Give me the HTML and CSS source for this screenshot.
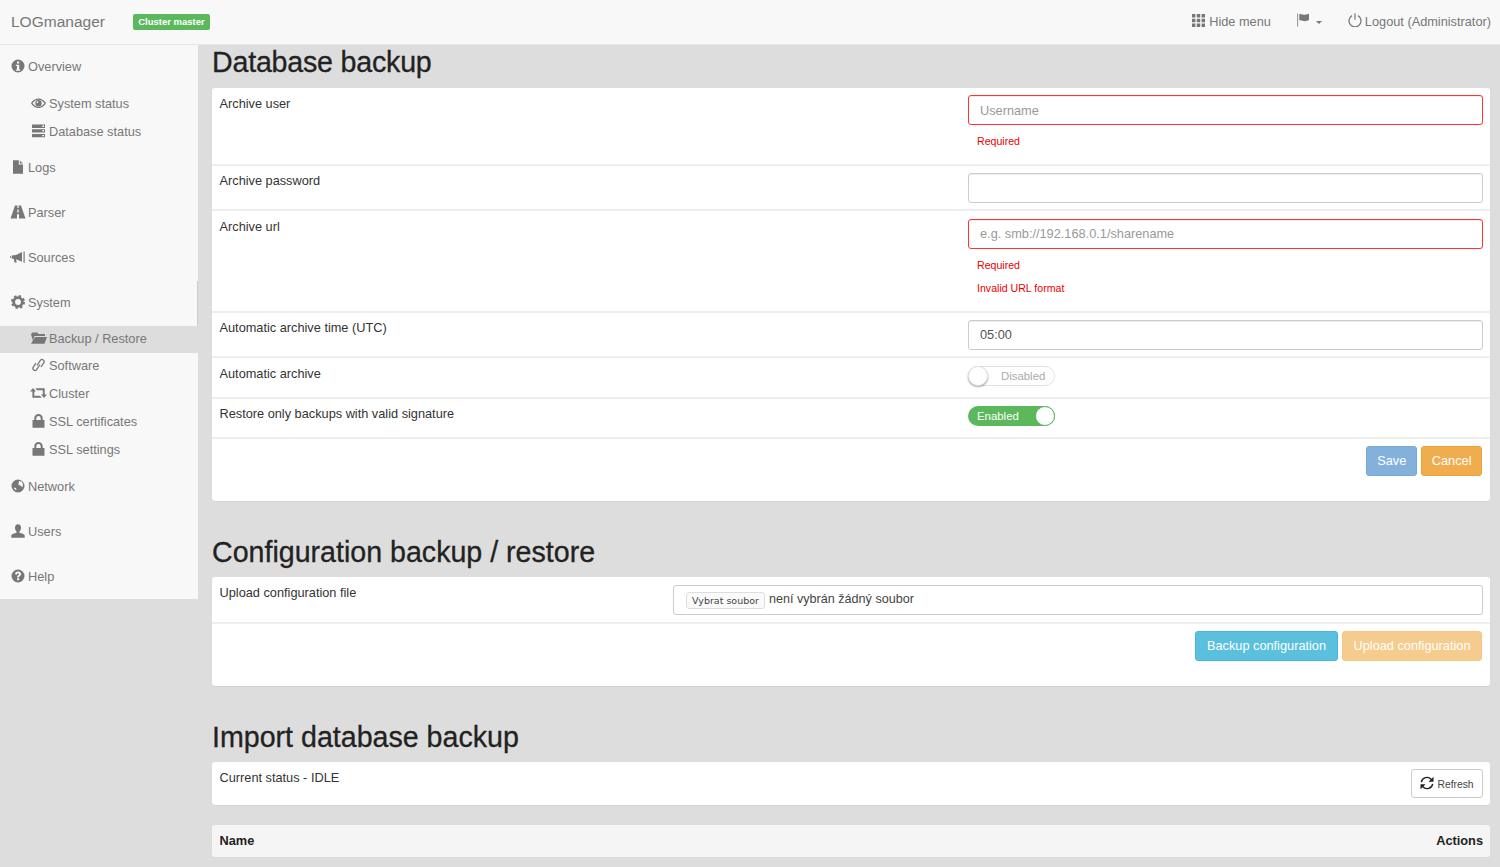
FILE: index.html
```html
<!DOCTYPE html>
<html lang="en">
<head>
<meta charset="utf-8">
<title>LOGmanager</title>
<link rel="stylesheet" href="styles.css">
</head>
<body>
<svg class="defs" width="0" height="0" aria-hidden="true">
  <symbol id="i-info" viewBox="0 0 14 14"><path fill-rule="evenodd" d="M7 .5a6.5 6.5 0 1 0 0 13a6.5 6.5 0 0 0 0-13zM6 2.6h2.2v2H6zM4.900 5.800h3.300v4.700h1v1.200H4.900v-1.200H6V7H4.900z"/></symbol>
  <symbol id="i-eye" viewBox="0 0 15 14"><path fill-rule="evenodd" d="M7.500 2.500C4 2.500 1.300 5 0 7.200C1.300 9.500 4 12 7.500 12S13.700 9.500 15 7.200C13.700 5 11 2.500 7.500 2.500zM7.500 3.800C10 3.800 12.200 5.500 13.400 7.200C12.200 9 10 10.800 7.500 10.800S2.800 9 1.600 7.200C2.800 5.500 5 3.800 7.500 3.800z"/><path fill-rule="evenodd" d="M7.500 4a3.200 3.200 0 1 0 0 6.400a3.200 3.200 0 0 0 0-6.400zM6 5.200l1.500.6l-.8 1.400l-1.300-.7z"/></symbol>
  <symbol id="i-server" viewBox="0 0 15 14"><path fill-rule="evenodd" d="M1 .5h13v3.400H1zM11.200 1.500v1.400h1.800V1.500zM1 5.200h13v3.400H1zM11.200 6.200v1.400h1.800V6.200zM1 9.900h13v3.400H1zM11.200 10.900v1.400h1.800v-1.400z"/></symbol>
  <symbol id="i-file" viewBox="0 0 14 14"><path d="M2 .3h5.800v4.200H12v9.200H2z"/><path d="M8.800.5L12 3.600H8.800z"/></symbol>
  <symbol id="i-road" viewBox="0 0 15 14"><path fill-rule="evenodd" d="M4.500 .5H10.500L15 13.500H0zM6.900 .5h1.200v2.600H6.900zM6.800 4.600h1.400v3H6.800zM6.500 9.200h2v4.300h-2z"/></symbol>
  <symbol id="i-horn" viewBox="0 0 16 14"><path d="M0 6.300l.9-.2V8L0 7.800zM1.700 5.500L6 5L12 2V11.800L6 9.300L6.700 12.400H4.600L3.800 9L1.700 8.600zM13.500 1.500h1.200v11.200h-1.200z"/></symbol>
  <symbol id="i-cog" viewBox="0 0 14 14"><circle cx="7" cy="7" r="4.300" fill="none" stroke="currentColor" stroke-width="2.800"/><circle cx="7" cy="7" r="6" fill="none" stroke="currentColor" stroke-width="2" stroke-dasharray="2.400 2.310"/></symbol>
  <symbol id="i-folder" viewBox="0 0 17 14"><path d="M2.500 1.500H7.500L8.500 3H15V5H4.500L2.800 9.500L1 3zM5 6H17L14.500 12.800H1z"/></symbol>
  <symbol id="i-link" viewBox="0 0 14 14"><g fill="none" stroke="currentColor" stroke-width="1.300"><path d="M5.500 7.500L9 2.200a2.100 2.100 0 0 1 3.400 2.400L9.500 9"/><path d="M8.500 6.500L5 11.800a2.100 2.100 0 0 1-3.400-2.400L4.500 5"/></g></symbol>
  <symbol id="i-retweet" viewBox="0 0 17 14"><path d="M3 2L6 5.500H4.300V9.800H10L11.700 11.700H2.400V5.500H0zM5.400 2.300H14.700V8.500H17L14 12L11 8.500H12.800V4.200H7z"/></symbol>
  <symbol id="i-lock" viewBox="0 0 14 14"><path fill-rule="evenodd" d="M1 6h1.800V4.300a4.200 4.200 0 0 1 8.400 0V6H13v7.800H1zM4.800 6h4.400V4.300a2.200 2.200 0 0 0-4.400 0z"/></symbol>
  <symbol id="i-globe" viewBox="0 0 14 14"><path fill-rule="evenodd" d="M7 .5a6.500 6.500 0 1 0 0 13a6.500 6.500 0 0 0 0-13zM8 2L10.500 2.500L12 5L11.500 8.500L9.500 6.500L7.500 6L7.500 4.500zM2.500 8.500L5 9L5.500 11L3.800 10.500z"/></symbol>
  <symbol id="i-user" viewBox="0 0 14 14"><path d="M7 .3c2 0 3 1.500 3 3.400c0 1.700-.7 3-1.500 3.800v1.200c2.200.6 4.800 1.400 5.200 2.600v2.400H.3v-2.400c.4-1.200 3-2 5.200-2.600V7.500C4.700 6.700 4 5.400 4 3.700C4 1.800 5 .3 7 .3z"/></symbol>
  <symbol id="i-help" viewBox="0 0 14 14"><path fill-rule="evenodd" d="M7 .5a6.500 6.500 0 1 0 0 13a6.500 6.500 0 0 0 0-13zM4 5.200C4.200 3.500 5.400 2.600 7.100 2.600C8.900 2.600 10.100 3.600 10.100 5C10.100 6.100 9.400 6.700 8.700 7.200C8.200 7.500 8 7.800 8 8.500H6.100C6.100 7.300 6.500 6.700 7.200 6.200C7.700 5.900 8 5.600 8 5.100C8 4.600 7.600 4.300 7 4.300C6.400 4.300 6 4.700 5.900 5.400zM6 9.300h2.100v2H6z"/></symbol>
  <symbol id="i-th" viewBox="0 0 13 13"><path d="M0 0h3.400v3.400H0zM4.800 0h3.400v3.400H4.800zM9.600 0H13v3.400H9.600zM0 4.800h3.400v3.400H0zM4.800 4.800h3.400v3.400H4.800zM9.600 4.800H13v3.400H9.600zM0 9.600h3.400V13H0zM4.800 9.600h3.400V13H4.800zM9.600 9.600H13V13H9.600z"/></symbol>
  <symbol id="i-flag" viewBox="0 0 13 14"><path d="M.3 .5h.8v13H.3z"/><path d="M2.300 1.200C4.500 .5 6 2 8 1.800C9.500 1.700 10.800 1.200 12 .8V7C10.500 7.700 9.300 8.200 7.800 8.200C6 8.200 4.500 6.700 2.300 7.400z"/></symbol>
  <symbol id="i-power" viewBox="0 0 14 14"><path d="M4 2.600A6 6 0 1 0 10 2.600" fill="none" stroke="currentColor" stroke-width="1.300"/><path d="M6.400 .2h1.200v6.600H6.400z"/></symbol>
  <symbol id="i-refresh" viewBox="0 0 14 14"><g fill="none" stroke="currentColor" stroke-width="1.400"><path d="M1.300 6.200A5.700 5.700 0 0 1 11.300 3.500"/><path d="M12.700 7.800A5.700 5.700 0 0 1 2.700 10.500"/></g><path d="M13.500 .8v5H8.500zM.5 13.200v-5h5z"/></symbol>
</svg>

<header class="navbar">
  <span class="brand">LOGmanager</span>
  <span class="badge">Cluster master</span>
  <nav class="nav-right">
    <span class="nav-link nav-hide"><svg class="ic-th"><use href="#i-th"/></svg>Hide menu</span>
    <span class="nav-link nav-flag"><svg class="ic-flag"><use href="#i-flag"/></svg><span class="caret"></span></span>
    <span class="nav-link"><svg class="ic-power"><use href="#i-power"/></svg>Logout (Administrator)</span>
  </nav>
</header>

<div class="layout">
  <aside class="sidebar">
    <a class="item item-first"><svg class="ic"><use href="#i-info"/></svg>Overview</a>
    <a class="sub sub-top"><svg class="ic-sub"><use href="#i-eye"/></svg>System status</a>
    <a class="sub sub-top"><svg class="ic-sub"><use href="#i-server"/></svg>Database status</a>
    <a class="item"><svg class="ic"><use href="#i-file"/></svg>Logs</a>
    <a class="item"><svg class="ic-wide"><use href="#i-road"/></svg>Parser</a>
    <a class="item"><svg class="ic-wide"><use href="#i-horn"/></svg>Sources</a>
    <a class="item item-open"><svg class="ic"><use href="#i-cog"/></svg>System</a>
    <a class="sub sub-active"><svg class="ic-sub-wide"><use href="#i-folder"/></svg>Backup / Restore</a>
    <a class="sub"><svg class="ic-sub"><use href="#i-link"/></svg>Software</a>
    <a class="sub"><svg class="ic-sub-wide"><use href="#i-retweet"/></svg>Cluster</a>
    <a class="sub"><svg class="ic-sub"><use href="#i-lock"/></svg>SSL certificates</a>
    <a class="sub"><svg class="ic-sub"><use href="#i-lock"/></svg>SSL settings</a>
    <a class="item"><svg class="ic"><use href="#i-globe"/></svg>Network</a>
    <a class="item"><svg class="ic"><use href="#i-user"/></svg>Users</a>
    <a class="item"><svg class="ic"><use href="#i-help"/></svg>Help</a>
  </aside>

  <main class="content">
    <h1 class="title title-first">Database backup</h1>
    <section class="card">
      <div class="row row-user">
        <div class="label">Archive user</div>
        <div class="control">
          <div class="input input-error placeholder input-user">Username</div>
          <div class="error error-first">Required</div>
        </div>
      </div>
      <div class="row row-input">
        <div class="label">Archive password</div>
        <div class="control"><div class="input"></div></div>
      </div>
      <div class="row row-url">
        <div class="label">Archive url</div>
        <div class="control">
          <div class="input input-error placeholder">e.g. smb://192.168.0.1/sharename</div>
          <div class="error error-first">Required</div>
          <div class="error">Invalid URL format</div>
        </div>
      </div>
      <div class="row row-input">
        <div class="label">Automatic archive time (UTC)</div>
        <div class="control"><div class="input">05:00</div></div>
      </div>
      <div class="row row-switch row-switch-first">
        <div class="label">Automatic archive</div>
        <div class="control">
          <div class="switch switch-off"><span class="knob"></span><span class="switch-text">Disabled</span></div>
        </div>
      </div>
      <div class="row row-switch">
        <div class="label">Restore only backups with valid signature</div>
        <div class="control">
          <div class="switch switch-on"><span class="switch-text">Enabled</span><span class="knob"></span></div>
        </div>
      </div>
      <div class="actions actions-db">
        <span class="btn btn-save">Save</span>
        <span class="btn btn-cancel">Cancel</span>
      </div>
    </section>

    <h1 class="title title-next">Configuration backup / restore</h1>
    <section class="card">
      <div class="row row-file">
        <div class="label">Upload configuration file</div>
        <div class="file-box"><span class="file-btn">Vybrat soubor</span><span class="file-text">není vybrán žádný soubor</span></div>
      </div>
      <div class="actions actions-cfg">
        <span class="btn btn-info">Backup configuration</span>
        <span class="btn btn-upload">Upload configuration</span>
      </div>
    </section>

    <h1 class="title title-next">Import database backup</h1>
    <section class="card status-card">
      <div class="status-label">Current status - IDLE</div>
      <span class="btn-refresh"><svg class="ic-refresh"><use href="#i-refresh"/></svg>Refresh</span>
    </section>
    <section class="table-head"><span>Name</span><span>Actions</span></section>
  </main>
</div>
</body>
</html>
```
FILE: styles.css
```css
* { box-sizing: border-box; }
html, body { margin: 0; height: 867px; overflow: hidden; }
body {
  background: #ddd;
  color: #333;
  font-family: "Liberation Sans", Arial, sans-serif;
  font-size: 12.75px;
  line-height: 18px;
}
.defs { display: block; height: 0; }
svg { fill: currentColor; flex: none; }

.navbar {
  height: 45px;
  background: #f8f8f8;
  border-bottom: 1px solid #e7e7e7;
  display: flex;
  align-items: center;
  padding: 0 9px 1px 11px;
  color: #777;
}
.brand { font-size: 15.5px; width: 122px; }
.badge {
  background: #5cb85c;
  color: #fff;
  font-size: 9.5px;
  font-weight: 700;
  line-height: 16px;
  height: 16px;
  width: 77px;
  text-align: center;
  border-radius: 2px;
  white-space: nowrap;
}
.nav-right { margin-left: auto; display: flex; align-items: center; }
.nav-link { display: flex; align-items: center; }
.nav-hide { margin-right: 26px; }
.nav-flag { margin-right: 26px; }
.ic-th { width: 13px; height: 13px; margin: -3px 4px 0 0; }
.ic-flag { width: 13px; height: 14px; margin-top: -3px; }
.ic-power { width: 14px; height: 14px; margin: -4px 3px 0 0; }
.caret {
  width: 0; height: 0;
  margin: 2px 0 0 6px;
  border-left: 3px solid transparent;
  border-right: 3px solid transparent;
  border-top: 3px solid #777;
}

.layout { display: flex; align-items: flex-start; }
.sidebar {
  width: 198px;
  background: #f8f8f8;
  color: #777;
  flex: none;
  height: 554px;
}
.item, .sub { display: flex; align-items: center; white-space: nowrap; }
.item { height: 45px; padding: 0 0 1px 11px; }
.item-first { padding-bottom: 2px; }
.sub { height: 27.8px; padding: 0 0 1.6px 31px; }
.sub-top { padding-bottom: 0; }
.item-open { box-shadow: inset -1px 0 0 #ccc; }
.sub-active { background: #ddd; }
.ic { width: 14px; height: 14px; margin: -2px 3px 0 0; }
.ic-wide { width: 16px; height: 14px; margin: -2px 2px 0 -1px; }
.ic-sub { width: 15px; height: 14px; margin: -2px 3px 0 0; }
.ic-sub-wide { width: 17px; height: 14px; margin: -2px 2px 0 -1px; }

.content { flex: 1; padding: 0 10px 0 14px; min-width: 0; }
.title {
  margin: 0;
  font-size: 28.6px;
  font-weight: 400;
  line-height: 35px;
  height: 43px;
  color: #222;
  -webkit-text-stroke: .3px #222;
  white-space: nowrap;
}
.title-first { letter-spacing: -.2px; }
.title-next { margin-top: 34px; height: 42px; }
.card {
  background: #fff;
  border-radius: 3px;
  box-shadow: 0 1px 1px rgba(0,0,0,.05);
}
.row {
  display: grid;
  grid-template-columns: 748.5px 1fr;
  padding: 6px 7.5px 0;
  border-bottom: 2px solid #eee;
}
.control { padding-top: 1px; }
.row-user, .row-url, .row-switch-first { padding-top: 7px; }
.row-user .control, .row-switch-first .control { padding-top: 0; }
.row-url .control { padding-top: 1px; }
.row-user { height: 78px; }
.row-input { height: 45px; }
.row-url { height: 102px; }
.row-switch { height: 40.5px; }
.input {
  height: 30px;
  border: 1px solid #ccc;
  border-radius: 3px;
  padding: 0 11px;
  line-height: 28px;
  box-shadow: inset 0 1px 1px rgba(0,0,0,.075);
  color: #555;
}
.input-user { line-height: 29px; }
.input-error { border-color: #f33; }
.placeholder { color: #999; }
.error { color: #e00; font-size: 10.6px; line-height: 14px; margin: 9.5px 0 0 9px; }
.error-first { margin-top: 8.5px; }

.switch {
  width: 87px; height: 20px;
  border-radius: 10px;
  display: flex;
  align-items: center;
  font-size: 11.4px;
  margin-top: 1px;
}
.switch-off { border: 1px solid #e1e1e1; color: #aaa; margin-top: 0.5px; }
.switch-off .knob { margin-left: -1px; box-shadow: 0 1px 2px rgba(0,0,0,.4); }
.switch-off .switch-text { margin-left: 13px; }
.switch-on { background: #5cb85c; color: #fff; justify-content: space-between; padding: 0 0 0 9px; margin-top: 0; }
.knob { width: 20px; height: 20px; border-radius: 50%; background: #fff; border: 1px solid #e4e4e4; flex: none; }
.switch-on .knob { border-color: #5cb85c; }

.actions { display: flex; justify-content: flex-end; gap: 4px; padding-right: 8px; }
.actions-db { height: 62px; padding-top: 7px; }
.actions-cfg { height: 62px; padding-top: 7px; }
.btn {
  height: 30px;
  line-height: 28px;
  padding: 0 10px;
  border-radius: 3px;
  color: #fff;
  border: 1px solid transparent;
  white-space: nowrap;
}
.btn-save { background: #84b1dc; border-color: #7aa8d4; }
.btn-cancel { background: #f0ad4e; border-color: #eea236; padding: 0 9.5px; }
.btn-info { background: #5bc0de; border-color: #46b8da; padding: 0 11px; }
.btn-upload { background: #f6cb8e; border-color: #f5c784; padding: 0 10.5px; }

.row-file { grid-template-columns: 453.5px 1fr; height: 47px; padding: 7px 7px 0 7.5px; }
.file-box {
  height: 30px;
  margin-top: 1px;
  border: 1px solid #ccc;
  border-radius: 3px;
  display: flex;
  align-items: center;
  padding: 0 0 2px 12px;
  color: #444;
}
.file-btn {
  font-family: "DejaVu Sans", sans-serif;
  font-size: 9.5px;
  line-height: 15px;
  height: 17px;
  width: 79px;
  text-align: center;
  border: 1px solid #ddd;
  border-radius: 3px;
  margin: 2px 4px 0 0;
  background: #fafafa;
  white-space: nowrap;
}
.file-text { font-size: 12.6px; }

.status-card {
  height: 43px;
  display: flex;
  justify-content: space-between;
  padding: 7px 7px 0 7.5px;
}
.btn-refresh {
  width: 72px; height: 29px;
  border: 1px solid #ccc;
  border-radius: 3px;
  font-size: 10.3px;
  color: #444;
  display: flex;
  align-items: center;
  justify-content: center;
  padding: 2px 0 0 0;
}
.ic-refresh { width: 14px; height: 14px; margin: -4px 3px 0 0; color: #222; }
.table-head {
  margin-top: 20px;
  height: 32px;
  background: #f5f5f5;
  border-radius: 3px;
  display: flex;
  justify-content: space-between;
  align-items: center;
  padding: 0 7px 0 7.5px;
  font-weight: 700;
  color: #222;
}
```
